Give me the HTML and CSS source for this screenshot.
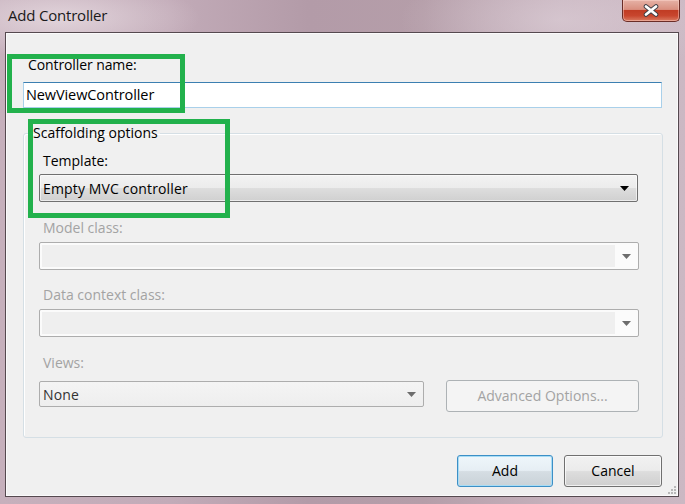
FILE: index.html
```html
<!DOCTYPE html>
<html>
<head>
<meta charset="utf-8">
<link rel="stylesheet" href="styles.css">
</head>
<body>
<div class="window">
  <div class="titlebar">
    <span class="title">Add Controller</span>
    <div class="close">
      <svg width="16" height="13" viewBox="0 0 16 13">
        <g stroke-linecap="round">
          <line x1="3" y1="2.5" x2="13" y2="10.5" stroke="#3f3f46" stroke-width="4.6"/>
          <line x1="13" y1="2.5" x2="3" y2="10.5" stroke="#3f3f46" stroke-width="4.6"/>
          <line x1="3" y1="2.5" x2="13" y2="10.5" stroke="#ffffff" stroke-width="2.8"/>
          <line x1="13" y1="2.5" x2="3" y2="10.5" stroke="#ffffff" stroke-width="2.8"/>
        </g>
      </svg>
    </div>
  </div>
  <div class="client">
    <div class="name-label">Controller name:</div>
    <div class="textbox">NewViewController</div>
    <fieldset class="group">
      <legend class="legend">Scaffolding options</legend>
      <div class="label">Template:</div>
      <div class="combo combo-active">
        <span class="combo-text">Empty MVC controller</span>
        <span class="arrow"><svg width="9" height="5" viewBox="0 0 9 5"><polygon points="0,0 9,0 4.5,5" fill="#000"/></svg></span>
      </div>
      <div class="label label-disabled gap-model">Model class:</div>
      <div class="combo combo-disabled">
        <span class="field"></span>
        <span class="arrow"><svg width="9" height="5" viewBox="0 0 9 5"><polygon points="0,0 9,0 4.5,5" fill="#6d6d6d"/></svg></span>
      </div>
      <div class="label label-disabled gap-data">Data context class:</div>
      <div class="combo combo-disabled">
        <span class="field"></span>
        <span class="arrow"><svg width="9" height="5" viewBox="0 0 9 5"><polygon points="0,0 9,0 4.5,5" fill="#6d6d6d"/></svg></span>
      </div>
      <div class="label label-disabled gap-views">Views:</div>
      <div class="views-row">
        <div class="combo combo-views">
          <span class="combo-text views-text">None</span>
          <span class="arrow"><svg width="9" height="5" viewBox="0 0 9 5"><polygon points="0,0 9,0 4.5,5" fill="#6d6d6d"/></svg></span>
        </div>
        <div class="btn btn-disabled">Advanced Options...</div>
      </div>
    </fieldset>
    <div class="actions">
      <div class="btn btn-default btn-add">Add</div>
      <div class="btn btn-cancel">Cancel</div>
    </div>
    <div class="grip">
      <svg width="10" height="10" viewBox="0 0 10 10">
        <rect x="7" y="1" width="2" height="2" fill="#b8b8b8"/>
        <rect x="4" y="4" width="2" height="2" fill="#b8b8b8"/>
        <rect x="7" y="4" width="2" height="2" fill="#b8b8b8"/>
        <rect x="1" y="7" width="2" height="2" fill="#b8b8b8"/>
        <rect x="4" y="7" width="2" height="2" fill="#b8b8b8"/>
        <rect x="7" y="7" width="2" height="2" fill="#b8b8b8"/>
      </svg>
    </div>
  </div>
  <div class="mark mark-name"></div>
  <div class="mark mark-template"></div>
</div>
</body>
</html>
```
FILE: styles.css
```css
* { box-sizing: border-box; }
html, body { margin: 0; padding: 0; }
body {
  width: 685px;
  height: 504px;
  overflow: hidden;
  font-family: "Open Sans", "Noto Sans", sans-serif;
  font-size: 14px;
  color: #000;
}
.window {
  position: relative;
  width: 685px;
  height: 504px;
  background:
    radial-gradient(ellipse 140px 40px at 60px 18px, rgba(238,228,233,0.7), rgba(238,228,233,0) 100%),
    radial-gradient(ellipse 160px 60px at 560px 20px, rgba(225,212,220,0.55), rgba(225,212,220,0) 100%),
    linear-gradient(90deg, #c6b0bc 0%, #c2abb8 25%, #b39ba8 45%, #b59ea9 62%, #c6b2bd 82%, #cbb8c3 100%);
  display: flex;
  flex-direction: column;
}
.titlebar {
  height: 32px;
  display: flex;
  justify-content: space-between;
  align-items: flex-start;
  flex: none;
}
.title {
  padding: 5px 0 0 8px;
  font-size: 15px;
  line-height: 20px;
  color: #1a1a1a;
  letter-spacing: -0.2px;
}
.close {
  width: 58px;
  height: 22px;
  margin-right: 5px;
  border: 1px solid #6a2d27;
  border-top: none;
  border-radius: 0 0 5px 5px;
  background: linear-gradient(180deg, #e6b2a6 0%, #d98f7f 45%, #c13c24 50%, #c8462e 75%, #da7a60 100%);
  box-shadow: inset 0 0 0 1px rgba(255,220,210,0.45);
  display: flex;
  align-items: center;
  justify-content: center;
}
.close svg { display: block; margin-top: -1px; }
.client {
  position: relative;
  margin: 0 6px 0 5px;
  height: 465px;
  border: 1px solid #55494f;
  box-shadow: inset 0 0 0 1px #fbfafb;
  background: #f0f0f0;
  padding: 22px 16px 0 17px;
}
.name-label {
  padding-left: 5px;
  line-height: 20px;
  letter-spacing: -0.1px;
}
.textbox {
  margin-top: 7px;
  width: 639px;
  height: 26px;
  border: 1px solid #a9d0ea;
  border-top-color: #3c7fb1;
  background: #fff;
  padding-left: 2px;
  line-height: 24px;
  font-size: 14.5px;
  letter-spacing: -0.1px;
}
.group {
  margin: 15px 0 0 0;
  width: 640px;
  border: 1px solid #d5dfe5;
  border-radius: 3px;
  box-shadow: inset 1px 1px 0 #fff;
  padding: 8px 23px 25px 15px;
  min-width: 0;
}
.legend {
  padding: 0 2px;
  margin-left: -8px;
  line-height: 20px;
}
.label {
  padding-left: 4px;
  line-height: 20px;
}
.label-disabled { color: #a3a3a3; }
.gap-model { margin-top: 16px; }
.gap-data { margin-top: 15px; }
.gap-views { margin-top: 16px; }
.combo {
  display: flex;
  align-items: stretch;
  border-radius: 2px;
}
.combo-active {
  margin-top: 3px;
  height: 28px;
  width: 599px;
  border: 1px solid #707070;
  background: linear-gradient(180deg, #f3f3f3 0%, #ececec 48%, #dddddd 52%, #d0d0d0 100%);
  box-shadow: inset 0 0 0 1px rgba(255,255,255,0.6);
}
.combo-text {
  flex: 1;
  padding: 1px 0 0 3px;
  line-height: 26px;
  letter-spacing: 0.15px;
}
.arrow {
  width: 23px;
  display: flex;
  align-items: center;
  justify-content: center;
}
.combo-active .arrow { padding-right: 2px; }
.combo-disabled {
  margin-top: 4px;
  height: 28px;
  width: 600px;
  border: 1px solid #adadad;
  background: #fbfbfb;
}
.combo-disabled .field {
  flex: 1;
  margin: 2px 0 2px 2px;
  background: #efefef;
}
.views-row {
  margin-top: 7px;
  display: flex;
  align-items: flex-start;
  justify-content: space-between;
  width: 600px;
}
.combo-views {
  margin-top: 1px;
  width: 385px;
  height: 26px;
  border: 1px solid #adadad;
  background: linear-gradient(180deg, #f4f4f4 0%, #eeeeee 100%);
}
.views-text {
  color: #333;
  line-height: 24px;
}
.combo-views .arrow { width: 24px; }
.btn {
  height: 32px;
  border: 1px solid #707070;
  border-radius: 3px;
  background: linear-gradient(180deg, #f2f2f2 0%, #ebebeb 48%, #dddddd 52%, #cfcfcf 100%);
  box-shadow: inset 0 0 0 1px rgba(255,255,255,0.7);
  display: flex;
  align-items: center;
  justify-content: center;
  line-height: 20px;
}
.btn-disabled {
  width: 193px;
  border-color: #adb2b5;
  background: #f4f4f4;
  box-shadow: none;
  color: #a3a3a3;
}
.actions {
  margin-top: 17px;
  display: flex;
  justify-content: flex-end;
  gap: 11px;
  width: 639px;
}
.btn-add { width: 96px; }
.btn-cancel { width: 98px; }
.btn-default {
  border-color: #3c8fc6;
  box-shadow: inset 0 0 0 1px #a7dcf5;
  background: linear-gradient(180deg, #eef6fb 0%, #e6eef4 48%, #d5dde3 52%, #c9d2d8 100%);
}
.grip {
  position: absolute;
  right: 1px;
  bottom: 1px;
  width: 10px;
  height: 10px;
}
.grip svg { display: block; }
.mark {
  position: absolute;
  border: 5px solid #22b14c;
}
.mark-name {
  left: 7px;
  top: 54px;
  width: 178px;
  height: 59px;
}
.mark-template {
  left: 28px;
  top: 119px;
  width: 202px;
  height: 99px;
}
```
